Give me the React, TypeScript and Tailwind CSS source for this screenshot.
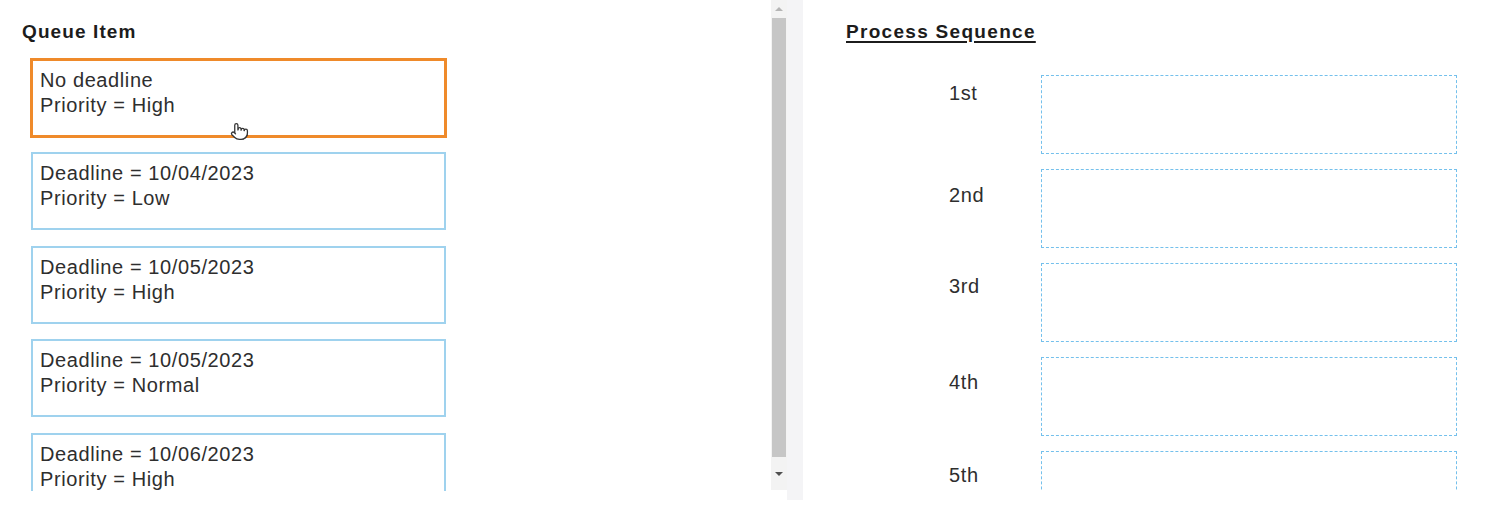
import { Pointer } from 'lucide-react';

const queueItems = [
  { deadline: 'No deadline', priority: 'High', active: true },
  { deadline: 'Deadline = 10/04/2023', priority: 'Low' },
  { deadline: 'Deadline = 10/05/2023', priority: 'High' },
  { deadline: 'Deadline = 10/05/2023', priority: 'Normal' },
  { deadline: 'Deadline = 10/06/2023', priority: 'High' },
];

const slots = [
  { label: '1st', pad: 'pt-[6px]' },
  { label: '2nd', pad: 'pt-[14px]' },
  { label: '3rd', pad: 'pt-[11px]' },
  { label: '4th', pad: 'pt-[13px]' },
  { label: '5th', pad: 'pt-[12px]' },
];

const App = () => {
  return (
    <div
      className="flex h-[517px] w-full overflow-hidden bg-white text-[#2e2e2e]"
      style={{ fontFamily: '"Liberation Sans", Arial, sans-serif' }}
    >
      {/* Queue column */}
      <div className="h-[491px] w-[771px] shrink-0 overflow-hidden">
        <h2 className="pl-[22px] pt-[20px] text-[19px] font-bold leading-[24px] tracking-[1.1px] text-[#1c1c1c]">
          Queue Item
        </h2>
        <div className="mt-[15px] flex w-[446px] flex-col gap-[15.4px] pl-[31px]">
          {queueItems.map((item, index) => (
            <div
              key={index}
              className={
                item.active
                  ? 'relative h-[78px] shrink-0 border-2 border-[#ef8a2a] px-[7px] pt-[7px] ring-1 ring-[#ef8a2a]'
                  : 'relative h-[78px] shrink-0 border-2 border-[#9fd2ee] px-[7px] pt-[7px]'
              }
            >
              <div className="text-[20px] leading-[25px] tracking-[0.6px]">{item.deadline}</div>
              <div className="text-[20px] leading-[25px] tracking-[0.6px]">Priority = {item.priority}</div>
              {item.active && (
                <Pointer
                  size={19}
                  strokeWidth={1.6}
                  className="absolute left-[197px] top-[61px] fill-white text-[#333]"
                />
              )}
            </div>
          ))}
        </div>
      </div>

      {/* Scrollbar */}
      <div className="flex h-[490px] w-[16px] shrink-0 flex-col items-center bg-[#f3f3f3]">
        <div className="flex h-[18px] w-full items-center justify-center">
          <div className="h-0 w-0 border-x-[4px] border-b-[4px] border-x-transparent border-b-[#b5b5b5]" />
        </div>
        <div className="h-[439px] w-[14px] bg-[#c6c6c6]" />
        <div className="flex w-full flex-1 items-center justify-center">
          <div className="h-0 w-0 border-x-[4px] border-t-[4px] border-x-transparent border-t-[#505050]" />
        </div>
      </div>

      {/* Divider */}
      <div className="h-[500px] w-[16px] shrink-0 bg-[#f4f4f6]" />

      {/* Process sequence column */}
      <div className="h-[491px] flex-1 overflow-hidden pl-[43px] pt-[20px]">
        <h2 className="text-[19px] font-bold leading-[24px] tracking-[1.3px] text-[#1c1c1c] underline decoration-[1.5px] underline-offset-[3px]">
          Process Sequence
        </h2>
        <div className="mt-[31px] flex flex-col gap-[15px]">
          {slots.map((slot) => (
            <div key={slot.label} className="flex">
              <div className={`w-[195px] shrink-0 pl-[103px] text-[20px] leading-[25px] tracking-[0.6px] ${slot.pad}`}>
                {slot.label}
              </div>
              <div className="h-[79px] w-[416px] shrink-0 border border-dashed border-[#74c0ec]" />
            </div>
          ))}
        </div>
      </div>
    </div>
  );
};

export default App;
